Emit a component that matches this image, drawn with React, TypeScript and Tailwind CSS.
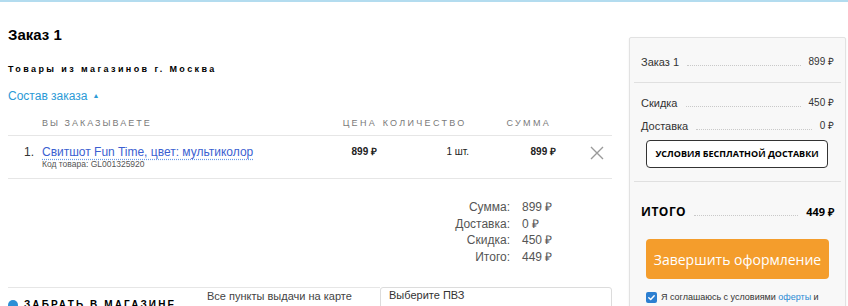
import React from "react";

const Leader = () => (
  <span className="flex-1 mx-2 mb-[3px] border-b border-dotted border-[#c9c9c9]" />
);

const CloseIcon = () => (
  <svg width="14" height="14" viewBox="0 0 14 14" className="text-[#9a9a9a]">
    <path d="M1 1L13 13M13 1L1 13" stroke="currentColor" strokeWidth="1.4" fill="none" />
  </svg>
);

export default function App() {
  const totals = [
    { label: "Сумма:", value: "899 ₽" },
    { label: "Доставка:", value: "0 ₽" },
    { label: "Скидка:", value: "450 ₽" },
    { label: "Итого:", value: "449 ₽" },
  ];

  return (
    <div className="w-[848px] h-[306px] overflow-hidden bg-white border-t-2 border-[#b3dcef] font-['Liberation_Sans',Arial,sans-serif] text-[#222]">
      <div className="flex pl-2 gap-[17px]">
        {/* left column */}
        <div className="w-[604px] shrink-0">
          <h1 className="mt-[24px] text-[15px] leading-[18px] font-bold text-black">Заказ 1</h1>
          <p className="mt-[19px] text-[9px] leading-[12px] font-bold tracking-[2.4px] text-black">
            Товары из магазинов г. Москва
          </p>
          <div className="mt-[14px] flex items-center gap-[5px] text-[12px] leading-[14px] text-[#2b9ad6]">
            <span>Состав заказа</span>
            <span className="text-[7px]">▲</span>
          </div>

          {/* table header */}
          <div className="mt-[14px] flex pb-[6px] border-b border-[#e6e6e6] text-[9px] leading-[12px] tracking-[2.3px] text-[#7a7a7a]">
            <div className="w-[300px] pl-[34px] tracking-[2px]">ВЫ ЗАКАЗЫВАЕТЕ</div>
            <div className="w-[69px] text-right mr-[-2.5px]">ЦЕНА</div>
            <div className="w-[92px] text-right mr-[-2.5px]">КОЛИЧЕСТВО</div>
            <div className="w-[87px] text-right mr-[-2.5px]">СУММА</div>
          </div>

          {/* item row */}
          <div className="flex pt-[9px] pb-[9px] border-b border-[#e6e6e6]">
            <div className="w-[300px] flex pl-[16px]">
              <span className="w-[18px] text-[12px] leading-[14px] text-[#333]">1.</span>
              <div>
                <a className="block text-[12px] leading-[14px] text-[#3b5fd1] underline decoration-dotted decoration-[#6a9be6] underline-offset-[3px]">
                  Свитшот Fun Time, цвет: мультиколор
                </a>
                <div className="text-[8.5px] leading-[10px] text-[#555]">Код товара: GL001325920</div>
              </div>
            </div>
            <div className="w-[69px] text-right text-[10px] leading-[14px] font-bold">899 ₽</div>
            <div className="w-[92px] text-right text-[10px] leading-[14px]">1 шт.</div>
            <div className="w-[87px] text-right text-[10px] leading-[14px] font-bold">899 ₽</div>
            <div className="pl-[34px] pt-[1px]">
              <CloseIcon />
            </div>
          </div>

          {/* totals */}
          <div className="mt-[20px] ml-[402px] flex flex-col text-[12px] leading-[16.7px] text-[#555]">
            {totals.map((t) => (
              <div key={t.label} className="flex">
                <span className="w-[100px] text-right">{t.label}</span>
                <span className="ml-[12px]">{t.value}</span>
              </div>
            ))}
          </div>

          {/* pickup */}
          <div className="mt-[21px] flex">
            <div className="w-[372px] border-t border-[#e6e6e6] flex">
              <div className="w-[199px] pt-[11px] flex items-start gap-[6px]">
                <span className="mt-[1px] w-[10px] h-[10px] rounded-full bg-[#2b8fd6] shrink-0" />
                <span className="text-[10px] leading-[12px] font-bold tracking-[2.1px] text-black whitespace-nowrap">ЗАБРАТЬ В МАГАЗИНЕ</span>
              </div>
              <div className="pt-[1px] text-[11px] leading-[14px] text-[#444]">Все пункты выдачи на карте</div>
            </div>
            <div className="w-[232px] h-[30px] border border-[#dcdcdc] rounded-t-[3px] px-[8px] text-[11px] leading-[14px] text-[#333]">
              Выберите ПВЗ
            </div>
          </div>
        </div>

        {/* right panel */}
        <div className="w-[217px] shrink-0 mt-[35px] h-[300px] bg-[#f8f8f8] border border-[#e2e2e2] rounded-[2px] shadow-[0_1px_2px_rgba(0,0,0,0.08)] px-[11px] pt-[17px]">
          <div className="flex items-end text-[11px] leading-[14px] text-[#333]">
            <span>Заказ 1</span>
            <Leader />
            <span className="text-[10px]">899 ₽</span>
          </div>
          <div className="mt-[13px] mx-[-7px] border-t border-[#e0e0e0]" />
          <div className="mt-[13px] flex items-end text-[11px] leading-[14px] text-[#333]">
            <span>Скидка</span>
            <Leader />
            <span className="text-[10px]">450 ₽</span>
          </div>
          <div className="mt-[9px] flex items-end text-[11px] leading-[14px] text-[#333]">
            <span>Доставка</span>
            <Leader />
            <span className="text-[10px]">0 ₽</span>
          </div>
          <button className="mt-[7px] ml-[5px] w-[182px] h-[28px] border border-[#333] rounded-[4px] bg-white font-['Open_Sans',sans-serif] text-[9px] font-bold text-black">
            УСЛОВИЯ БЕСПЛАТНОЙ ДОСТАВКИ
          </button>
          <div className="mt-[13px] mx-[-7px] border-t border-[#e0e0e0]" />
          <div className="mt-[23px] flex items-end font-['Open_Sans',sans-serif] text-[12px] leading-[14px] font-bold text-black">
            <span className="tracking-[0.5px]">ИТОГО</span>
            <Leader />
            <span className="text-[11px]">449 ₽</span>
          </div>
          <button className="mt-[20px] ml-[5px] w-[183px] h-[40px] rounded-[4px] bg-[#f49d2c] font-['Open_Sans',sans-serif] text-[14px] text-white">
            Завершить оформление
          </button>
          <div className="mt-[13px] ml-[5px] flex items-center gap-[4px]">
            <span className="w-[11px] h-[11px] rounded-[2px] bg-[#2c7fd1] flex items-center justify-center shrink-0">
              <svg width="9" height="9" viewBox="0 0 10 10">
                <path d="M2 5.2L4.1 7.2L8 3" stroke="white" strokeWidth="1.6" fill="none" strokeLinecap="round" strokeLinejoin="round" />
              </svg>
            </span>
            <span className="text-[9px] leading-[11px] text-[#333] whitespace-nowrap">
              Я соглашаюсь с условиями <span className="text-[#2a8ad4]">оферты</span> и
            </span>
          </div>
        </div>
      </div>
    </div>
  );
}
